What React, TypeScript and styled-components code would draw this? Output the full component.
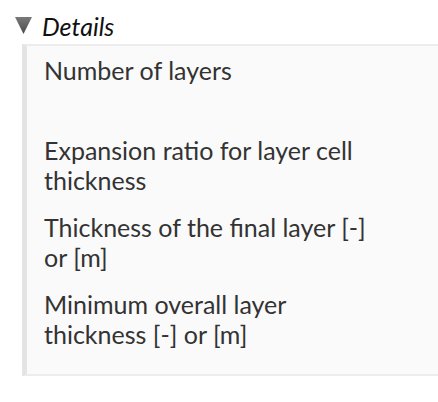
import React from "react";
import styled, { createGlobalStyle } from "styled-components";

const Global = createGlobalStyle`
  html, body { margin: 0; padding: 0; background: #ffffff; }
  body { font-family: Lato, "Open Sans", sans-serif; }
`;

const Details = styled.div`
  padding-top: 12px;
`;

const Summary = styled.div`
  display: flex;
  align-items: center;
  height: 27px;
  padding-left: 15px;
  gap: 10px;
`;

const Caret = styled.svg`
  width: 17px;
  height: 17px;
  display: block;
`;

const SummaryText = styled.span`
  font-style: italic;
  font-size: 25px;
  color: #111111;
`;

const Panel = styled.div`
  margin-top: 5px;
  margin-left: 22px;
  border-left: 5px solid #e4e4e4;
  border-top: 2px solid #ececec;
  border-bottom: 2px solid #ececec;
  background: #fafafa;
  padding: 9px 0 8px 17px;
  height: 332px;
  box-sizing: border-box;
`;

const Field = styled.div<{ $minHeight?: number }>`
  display: flex;
  margin-bottom: 17px;
  min-height: ${(p) => (p.$minHeight ? `${p.$minHeight}px` : "auto")};
`;

const Label = styled.div`
  width: 335px;
  font-size: 25px;
  line-height: 30px;
  color: #333333;
`;

const fields: { label: string; minHeight?: number }[] = [
  { label: "Number of layers", minHeight: 63 },
  { label: "Expansion ratio for layer cell thickness" },
  { label: "Thickness of the final layer [-] or [m]" },
  { label: "Minimum overall layer thickness [-] or [m]" },
];

export default function App() {
  return (
    <>
      <Global />
      <Details>
        <Summary>
          <Caret viewBox="0 0 16 16">
            <defs>
              <linearGradient id="cg" x1="0" y1="0" x2="0" y2="1">
                <stop offset="0" stopColor="#7a7a7a" />
                <stop offset="1" stopColor="#4a4a4a" />
              </linearGradient>
            </defs>
            <polygon points="0,0 16,0 8,16" fill="url(#cg)" />
          </Caret>
          <SummaryText>Details</SummaryText>
        </Summary>
        <Panel>
          {fields.map((f) => (
            <Field key={f.label} $minHeight={f.minHeight}>
              <Label>{f.label}</Label>
            </Field>
          ))}
        </Panel>
      </Details>
    </>
  );
}
